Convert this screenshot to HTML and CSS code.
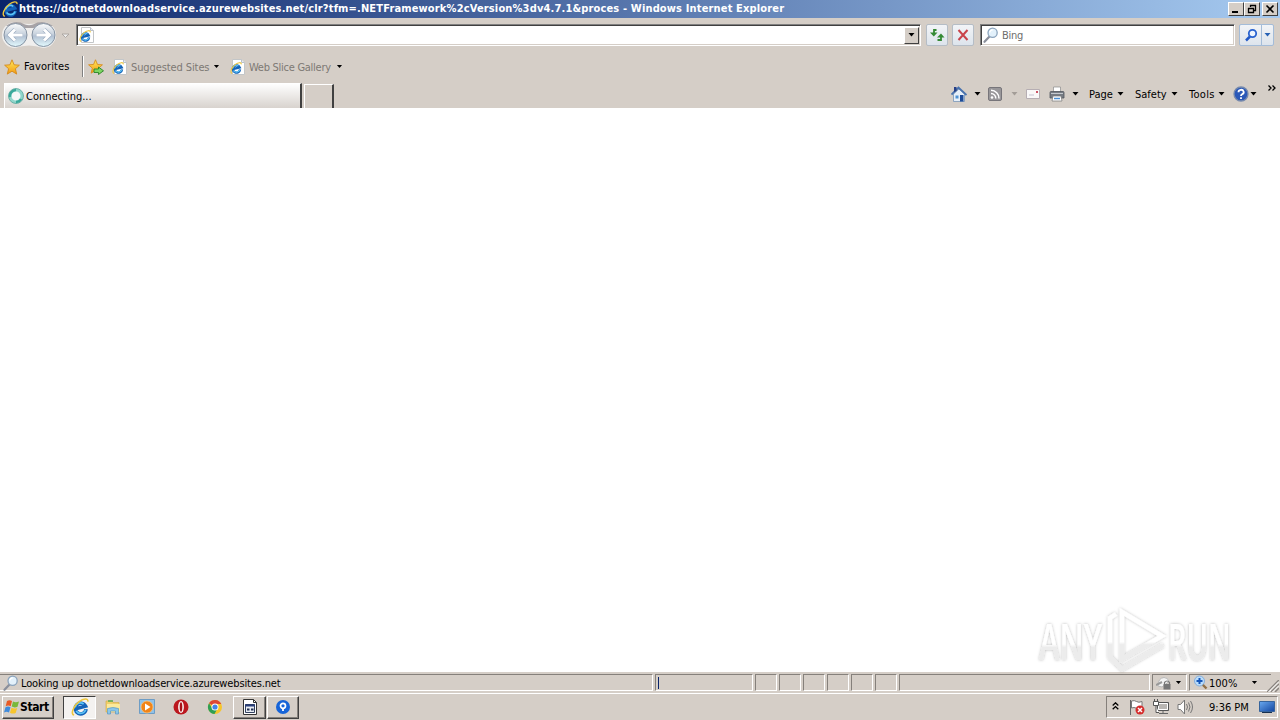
FILE: index.html
```html
<!DOCTYPE html>
<html lang="en">
<head>
    <meta charset="UTF-8">
    <title>Windows Internet Explorer</title>
    <link rel="stylesheet" href="styles.css">
</head>
<body>
    <svg class="defs" width="0" height="0">
        <defs>
            <linearGradient id="orb" x1="0" y1="0" x2="0" y2="1">
                <stop offset="0" stop-color="#fbfcfd"/>
                <stop offset=".45" stop-color="#c9d3de"/>
                <stop offset=".55" stop-color="#b3c1d3"/>
                <stop offset="1" stop-color="#e4fbff"/>
            </linearGradient>
            <linearGradient id="gold" x1="0" y1="0" x2="0" y2="1">
                <stop offset="0" stop-color="#ffe95c"/>
                <stop offset="1" stop-color="#f39a13"/>
            </linearGradient>
            <linearGradient id="screen" x1="0" y1="0" x2="1" y2="1">
                <stop offset="0" stop-color="#6aa9ef"/>
                <stop offset="1" stop-color="#1245a0"/>
            </linearGradient>
            <linearGradient id="mark" gradientUnits="userSpaceOnUse" x1="0" y1="0" x2="0" y2="70">
                <stop offset=".54" stop-color="#fff"/>
                <stop offset=".58" stop-color="#ececec"/>
            </linearGradient>
            <linearGradient id="letters" x1="0" y1="0" x2="0" y2="1">
                <stop offset=".55" stop-color="#fff"/>
                <stop offset=".6" stop-color="#ececec"/>
            </linearGradient>
            <filter id="soft" x="-10%" y="-20%" width="120%" height="150%">
                <feDropShadow dx="0" dy="0" stdDeviation="1.5" flood-color="#000" flood-opacity=".28"/>
            </filter>
        </defs>
        <symbol id="ie" viewBox="0 0 16 16">
            <g transform="rotate(-14 8 9)">
                <path d="M13 11.200A4.800 4.800 0 1 1 13.200 8.500H5" fill="none" stroke="#1463b8" stroke-width="3.200"/>
                <path d="M12.600 11.600A4.900 4.900 0 0 1 4 10.600M4 7.400A4.700 4.700 0 0 1 12 6.200" fill="none" stroke="#5cc4f6" stroke-width="1.500"/>
            </g>
            <path d="M2.800 15.200C-.8 14.500 2.200 7 7.200 3.200C10.800.6 15.400-.4 15 3.200" fill="none" stroke="#eec63c" stroke-width="1.400"/>
        </symbol>
        <symbol id="page" viewBox="0 0 16 16">
            <path d="M2.500.5h9l3 3v12h-12z" fill="#fff" stroke="#c3c6c8"/>
            <path d="M11.500.5v3h3" fill="#e8edf3" stroke="#b9c0ca"/>
            <use href="#ie" x="0" y="3" width="12" height="12"/>
        </symbol>
        <symbol id="star" viewBox="0 0 16 16">
            <path d="M8 .8l2.100 5 5.300.4-4 3.500 1.300 5.400L8 12.200l-4.700 2.900 1.300-5.400-4-3.500 5.300-.4z" fill="url(#gold)" stroke="#d58a1c" stroke-width=".9"/>
        </symbol>
        <symbol id="lens" viewBox="0 0 16 16">
            <path d="M6 10L1.500 14.800" stroke="#8a8f9b" stroke-width="2.200" stroke-linecap="round"/>
            <circle cx="9.600" cy="5.800" r="4.600" fill="#e3f1fb" stroke="#8ba4bd" stroke-width="1.300"/>
            <path d="M6.800 5.500a3 3 0 0 1 3-2.600" stroke="#fff" fill="none" stroke-width="1.300"/>
        </symbol>
    </svg>

    <header class="titlebar">
        <svg class="i16"><use href="#ie"/></svg>
        <span class="title">https://dotnetdownloadservice.azurewebsites.net/clr?tfm=.NETFramework%2cVersion%3dv4.7.1&amp;proces - Windows Internet Explorer</span>
        <div class="winbuttons">
            <button><svg viewBox="0 0 12 10"><path d="M2 8h6" stroke="#000" stroke-width="2"/></svg></button>
            <button><svg viewBox="0 0 12 10"><path d="M4 1.500h6M4.500 1v2M9.500 1v5.500H8M2 4.500h6M2.500 4v4.500h5V4" fill="none" stroke="#000" stroke-width="1.300"/></svg></button>
            <button class="close"><svg viewBox="0 0 12 10"><path d="M2.500 1.500l7 7M9.500 1.500l-7 7" stroke="#000" stroke-width="1.600"/></svg></button>
        </div>
    </header>

    <div class="navbar">
        <svg class="orbs" viewBox="0 0 70 30">
            <path d="M15 2Q29 6 43 2A13 13 0 0 1 43 28Q29 23 15 28A13 13 0 0 1 15 2" fill="#f0efee"/>
            <path d="M6 6Q15-1 25 4.500Q29 6 33 4.500Q43-1 53 6L33 8H25Z" fill="#a7a3a6"/>
            <circle cx="15.500" cy="15" r="11.500" fill="url(#orb)" stroke="#8593a3"/>
            <circle cx="43.500" cy="15" r="11.500" fill="url(#orb)" stroke="#8593a3"/>
            <path d="M22.500 15H10.500M15 9.500L9.500 15l5.500 5.500M36.500 15h12M44 9.500L49.500 15l-5.500 5.500" fill="none" stroke="#9aabc0" stroke-width="4.200"/>
            <path d="M22.500 15H10.500M15 9.500L9.500 15l5.500 5.500M36.500 15h12M44 9.500L49.500 15l-5.500 5.500" fill="none" stroke="#fff" stroke-width="3"/>
            <path d="M62 14h7l-3.500 3.500z" fill="#eee" stroke="#a8a39e" stroke-width=".9"/>
        </svg>
        <div class="address">
            <svg class="i16"><use href="#page"/></svg>
            <button class="drop"><i class="arrow"></i></button>
        </div>
        <button class="navbtn refresh"><svg class="i16" viewBox="0 0 16 16"><path d="M7.500 3H5v3M8.500 13H12v-3" fill="none" stroke="#358a35" stroke-width="1.800"/><path d="M1 5.500h7.500L4.800 9.500zM8 10.500h7.500L12 6.500z" fill="#358a35"/></svg></button>
        <button class="navbtn stop"><svg class="i16" viewBox="0 0 16 16"><path d="M3.500 3l9 10M12.500 3l-9 10" stroke="#c9434b" stroke-width="2"/></svg></button>
        <div class="search">
            <svg class="i16"><use href="#lens"/></svg>
            <span>Bing</span>
        </div>
        <button class="navbtn go"><svg class="i16" viewBox="0 0 16 16"><path d="M7 9.500L3 13.500" stroke="#2259c6" stroke-width="2.500"/><circle cx="9.500" cy="6.500" r="3.700" fill="#eef5ff" stroke="#2862cf" stroke-width="1.800"/></svg></button>
        <button class="navbtn godrop"><i class="arrow blue"></i></button>
    </div>

    <div class="favbar">
        <svg class="i16"><use href="#star"/></svg>
        <span class="favorites">Favorites</span>
        <div class="sep"></div>
        <svg class="i16 addfav" viewBox="0 0 16 16"><use href="#star" width="15" height="15"/><path d="M6 10h4.500V8l5 3.800-5 3.700v-2H6z" fill="#7ed663" stroke="#2a8427" stroke-width=".9"/></svg>
        <svg class="i16 link"><use href="#page"/></svg>
        <span class="suggested">Suggested Sites</span>
        <i class="arrow"></i>
        <svg class="i16 link2"><use href="#page"/></svg>
        <span class="slices">Web Slice Gallery</span>
        <i class="arrow"></i>
    </div>

    <div class="tabrow">
        <div class="tab">
            <svg class="i16" viewBox="0 0 16 16"><circle cx="8" cy="8" r="6" fill="#f5f7f7" stroke="#8fd6cb" stroke-width="3"/><path d="M2 9A6 6 0 0 1 8 2M8 14a6 6 0 0 0 5-3" fill="none" stroke="#39a99b" stroke-width="2.400"/><circle cx="8" cy="8" r="7.500" fill="none" stroke="#4f9d94" stroke-width=".7"/></svg>
            <span>Connecting...</span>
        </div>
        <div class="newtab"></div>
        <div class="commands">
            <svg class="i16" viewBox="0 0 16 16"><path d="M2.500 8v7.500h11V8L8 3z" fill="#e6eff9" stroke="#7895b8" stroke-width=".8"/><path d="M.5 8.500L7.500 1.500L15.500 9" fill="none" stroke="#4872ae" stroke-width="1.800"/><path d="M3 1h2.500v4L3 6z" fill="#263f86"/><path d="M9 9h3.500v6.500H9z" fill="#1d4b98"/><path d="M4.500 9.500h3v3h-3z" fill="#4f93d3"/></svg>
            <i class="arrow a1"></i>
            <svg class="i16 rss" viewBox="0 0 16 16"><rect x="1.500" y="1.500" width="13" height="13" rx="1.500" fill="#99979a" stroke="#77757a"/><circle cx="5" cy="11.500" r="1.300" fill="#fff"/><path d="M4 7.500a5 5 0 0 1 4.800 5M4 4.300a8 8 0 0 1 8 8.200" fill="none" stroke="#fff" stroke-width="1.500"/></svg>
            <i class="arrow a2 dim"></i>
            <svg class="i16 mail" viewBox="0 0 16 16"><path d="M1.500 3.500h13v9h-13z" fill="#faf8f8" stroke="#b6aeb3"/><path d="M11 5h2v2h-2z" fill="#cc5365"/><path d="M4 9h5" stroke="#c5c2d1"/></svg>
            <svg class="i16 print" viewBox="0 0 16 16"><path d="M4.500 1h7v5h-7z" fill="#fff" stroke="#8b8b8b" stroke-width=".7"/><path d="M1 6.500q0-1 1-1h12q1 0 1 1V12H1z" fill="#777c84" stroke="#52575e" stroke-width=".8"/><path d="M2 7.500h12" stroke="#c5c9ce"/><path d="M4 10h8l1 5H3z" fill="#fff" stroke="#777" stroke-width=".7"/><path d="M5 12.500h6" stroke="#4b8fd3" stroke-width="1.500"/></svg>
            <i class="arrow a3"></i>
            <span class="c-page">Page</span><i class="arrow"></i>
            <span class="c-safety">Safety</span><i class="arrow"></i>
            <span class="c-tools">Tools</span><i class="arrow"></i>
            <svg class="i16 help" viewBox="0 0 16 16"><circle cx="8" cy="8" r="7" fill="#2a58b8" stroke="#7689ac" stroke-width="1.300"/><path d="M5.500 6.200a2.600 2.300 0 1 1 3.600 2Q8 8.800 8 10M8 11.200v1.800" fill="none" stroke="#fff" stroke-width="1.800"/></svg>
            <i class="arrow a4"></i>
            <svg class="more" viewBox="0 0 8 6"><path d="M.5.5L3 3 .5 5.500M4.500.5L7 3 4.500 5.500" fill="none" stroke="#000" stroke-width="1.300"/></svg>
        </div>
    </div>

    <main class="content">
        <svg class="watermark" viewBox="0 0 210 80">
            <g filter="url(#soft)">
                <text transform="translate(9 56) scale(.62 1)">ANY</text>
                <text transform="translate(138 56) scale(.58 1)">RUN</text>
                <path d="M92 8L132 32L92 55Z"/>
                <path d="M86 10L80 14V53L92 65L133 41"/>
            </g>
        </svg>
    </main>

    <div class="statusbar">
        <div class="pane p-text"><svg class="i16"><use href="#lens"/></svg><span>Looking up dotnetdownloadservice.azurewebsites.net</span></div>
        <div class="pane p-progress"><b></b></div>
        <div class="pane p-small"></div>
        <div class="pane p-small"></div>
        <div class="pane p-small"></div>
        <div class="pane p-small"></div>
        <div class="pane p-small"></div>
        <div class="pane p-small"></div>
        <div class="pane p-zone"></div>
        <div class="pane p-lock">
            <svg class="i16" viewBox="0 0 16 16"><path d="M2 11q0-8 6-8.500 4 0 5 4L6 12z" fill="#f3f3f3" stroke="#b8b8b8"/><path d="M0 10l6-3" stroke="#999" stroke-width="2"/><path d="M8.500 9.500V7.500q2.500-3 5 0v2" fill="none" stroke="#777" stroke-width="1.200"/><path d="M7.500 9h7v5.500h-7z" fill="#777"/></svg>
            <i class="arrow"></i>
        </div>
        <div class="pane p-zoom">
            <svg class="i16" viewBox="0 0 16 16"><path d="M9.500 9.500l4 4" stroke="#927045" stroke-width="2.400"/><circle cx="6.500" cy="6" r="5" fill="#b9dcfb" stroke="#85aedb"/><path d="M6.500 3v6M3.500 6h6" stroke="#1556ba" stroke-width="2"/></svg>
            <span>100%</span>
            <i class="arrow"></i>
        </div>
        <svg class="grip" viewBox="0 0 12 12"><path d="M0 12L12 0M4 12l8-8M8 12l4-4" stroke="#8a8580" stroke-width="1.500"/><path d="M1.500 12L12 1.500M5.500 12L12 5.500" stroke="#fff"/></svg>
    </div>

    <footer class="taskbar">
        <button class="start">
            <svg class="i16" viewBox="0 0 16 16"><path d="M3 2q2.500-1.500 5 0L6.700 7.300q-2.500-1.500-5 0z" fill="#e85a25"/><path d="M9 2.500q2.500 1.500 6 0l-1.500 5.300q-3 1.300-5.800-.2z" fill="#79b83b"/><path d="M1.500 8.300q2.500-1.500 5 0L5 13.500q-2.500-1.500-5 0z" fill="#3f8bdc"/><path d="M7.500 8.700q2.500 1.500 5.700.2L11.700 14q-3 1.300-5.700-.3z" fill="#f7c52d"/></svg>
            <span>Start</span>
        </button>
        <div class="task pressed"><svg class="i18"><use href="#ie"/></svg></div>
        <svg class="i16 q1" viewBox="0 0 16 16"><path d="M1 2h6l1 1.500h6V13H1z" fill="#f0cf69" stroke="#d5aa43" stroke-width=".6"/><path d="M2 5h13v8H2z" fill="#fbe99c"/><path d="M3 2h5" stroke="#58aa53" stroke-width="1.500"/><path d="M2.500 15V9.500q5.500-2 11 0V15h-3v-3h-5v3z" fill="#8ac6ea" stroke="#4a8fc0" stroke-width=".6"/></svg>
        <svg class="i16 q2" viewBox="0 0 16 16"><path d="M.5.5h15v14H.5z" fill="#8fc2ea" stroke="#6e9dc5"/><circle cx="8" cy="8" r="6" fill="#f18418" stroke="#fbc176" stroke-width=".8"/><path d="M6 4.500v7L11.500 8z" fill="#fff"/></svg>
        <svg class="i16 q3" viewBox="0 0 16 16"><ellipse cx="8" cy="8" rx="7.500" ry="7.500" fill="#bb171e"/><ellipse cx="8" cy="8" rx="2.900" ry="6" fill="#fbf1f0"/><ellipse cx="8" cy="8" rx="1.300" ry="4.700" fill="#a71118"/></svg>
        <svg class="i16 q4" viewBox="0 0 16 16"><circle cx="8" cy="8" r="7" fill="#f6c52b"/><path d="M8 8L2 4.200A7 7 0 0 1 14.300 5H8z" fill="#dd4735"/><path d="M2 4.200A7 7 0 0 0 7.500 15L10.500 9.500 5.500 9.500z" fill="#2f9f54"/><circle cx="8" cy="8" r="3.500" fill="#fff"/><circle cx="8" cy="8" r="2.600" fill="#4384e8"/></svg>
        <div class="task t1"><svg class="i16" viewBox="0 0 16 16"><path d="M1.500.5h10l3 3v12h-13z" fill="#fff" stroke="#333"/><path d="M11.500.5v3h3" fill="none" stroke="#333"/><path d="M3.500 5.500h9v8h-9z" fill="#e8ecf3" stroke="#33415f"/><path d="M3 6.500h10" stroke="#273d79" stroke-width="2"/><path d="M5 10.500h2.500M9 10.500h2.500" stroke="#1d2c50" stroke-width="2"/></svg></div>
        <div class="task t2"><svg class="i16" viewBox="0 0 16 16"><circle cx="8" cy="8" r="7" fill="#1664d8"/><circle cx="8" cy="6.800" r="2.500" fill="#1664d8" stroke="#fff" stroke-width="1.700"/><path d="M8 9v3" stroke="#fff" stroke-width="1.800"/></svg></div>
        <div class="tray">
            <svg class="chev" viewBox="0 0 7 8"><path d="M.7 3.500L3.500.8l2.800 2.700M.7 7.300L3.500 4.600l2.800 2.700" fill="none" stroke="#000" stroke-width="1.300"/></svg>
            <svg class="i16 flag" viewBox="0 0 16 16"><path d="M1.500 1v15" stroke="#666"/><path d="M2.500 2q3-1 5 .5t5.500 0v7q-3 1-5.500-.3T2.500 9z" fill="#fff" stroke="#777"/><circle cx="11" cy="11" r="4.500" fill="#d52c2c"/><path d="M9 9l4 4M13 9l-4 4" stroke="#fff" stroke-width="1.500"/></svg>
            <svg class="i16 net" viewBox="0 0 16 16"><path d="M4.500 3.500h11v8h-11z" fill="#b9b6b3" stroke="#555"/><path d="M5.500 4.500h9v6h-9z" fill="none" stroke="#fff"/><path d="M6 14.500h9M10 12v2" stroke="#666"/><path d="M.5 2.500h5v4h-5zM1.500 0v2M4.500 0v2M3 7v6.500h3" fill="#fff" stroke="#555"/></svg>
            <svg class="i16 vol" viewBox="0 0 16 16"><path d="M1 5.500h2.500L7.500 1v14L3.500 10.500H1z" fill="#fff" stroke="#777"/><path d="M9.500 5q2 3 0 6M11.500 3.500q3 4.500 0 9M13.500 2q4 6 0 12" fill="none" stroke="#777"/></svg>
            <span class="clock">9:36 PM</span>
            <svg class="i16 desk" viewBox="0 0 16 16"><path d="M.5 2.500h15v10H.5z" fill="url(#screen)" stroke="#37649c"/><path d="M3 13.500h10" stroke="#18304f"/></svg>
        </div>
    </footer>
</body>
</html>
```

FILE: styles.css
```css
* {
    box-sizing: border-box;
}
body {
    margin: 0;
    width: 1280px;
    height: 720px;
    overflow: hidden;
    display: flex;
    flex-direction: column;
    background-color: #d5cec7;
    color: #000;
    font-family: 'DejaVu Sans Condensed', 'DejaVu Sans', sans-serif;
    font-size: 11px;
    line-height: 14px;
    white-space: nowrap;
}
button {
    padding: 0;
    font: inherit;
    color: inherit;
}
svg {
    display: block;
    flex: none;
}
span {
    flex: none;
}
.defs {
    position: absolute;
}
.i16 {
    width: 16px;
    height: 16px;
}
.i18 {
    width: 18px;
    height: 18px;
}
.arrow {
    flex: none;
    width: 7px;
    height: 4px;
    margin-left: -1px;
    margin-right: -1px;
    background-color: #000;
    clip-path: polygon(7% 0, 93% 0, 50% 88%);
}
.arrow.blue {
    background-color: #2862b5;
}
.arrow.dim {
    background-color: #a39d97;
}

/* title bar */
.titlebar {
    height: 18px;
    flex: none;
    display: flex;
    align-items: center;
    padding: 0 2px;
    background: linear-gradient(to right, #0a246a, #a6caf0);
    color: #fff;
}
.title {
    width: 800px;
    margin-left: 1px;
    font-weight: bold;
    letter-spacing: 0.152px;
}
.winbuttons {
    display: flex;
    margin-left: auto;
}
.winbuttons button {
    width: 16px;
    height: 14px;
    border: 1px solid;
    border-color: #fff #404040 #404040 #fff;
    background-color: #d5cec7;
}
.winbuttons .close {
    margin-left: 2px;
}
.winbuttons svg {
    width: 12px;
    height: 10px;
    margin: 1px;
}

/* address row */
.navbar {
    height: 36px;
    flex: none;
    display: flex;
    align-items: center;
    padding-bottom: 2px;
}
.orbs {
    width: 70px;
    height: 30px;
}
.address, .search {
    height: 22px;
    display: flex;
    align-items: center;
    background-color: #fff;
    border: 1px solid;
    border-color: #808080 #fff #fff #808080;
    box-shadow: inset 1px 1px #404040, inset -1px -1px #d5cec7;
}
.address {
    width: 845px;
    margin-left: 6px;
    padding: 0 1px 0 2px;
}
.drop {
    width: 15px;
    height: 17px;
    margin-left: auto;
    display: flex;
    align-items: center;
    justify-content: center;
    border: 1px solid;
    border-color: #fff #404040 #404040 #fff;
    background-color: #d5cec7;
}
.navbtn {
    width: 22px;
    height: 22px;
    display: flex;
    align-items: center;
    justify-content: center;
    border: 1px solid #b5bdc6;
    border-radius: 2px;
    background: linear-gradient(#f2f4f7, #dde4ec);
}
.refresh {
    margin-left: 5px;
}
.stop {
    margin-left: 4px;
}
.search {
    width: 255px;
    margin-left: 6px;
    padding-left: 2px;
    color: #6d6d6d;
}
.search span {
    margin: 2px 0 0 3px;
    letter-spacing: -0.3px;
}
.go {
    width: 23px;
    margin-left: 4px;
    border-radius: 2px 0 0 2px;
    border-color: #a4bcd8;
}
.godrop {
    width: 13px;
    margin-left: -1px;
    border-radius: 0 2px 2px 0;
    border-color: #a4bcd8;
}

/* favorites */
.favbar {
    height: 28px;
    flex: none;
    display: flex;
    align-items: center;
    padding: 0 0 3px 4px;
}
.favorites {
    width: 58px;
    margin-left: 4px;
    letter-spacing: 0.1px;
}
.sep {
    width: 2px;
    height: 21px;
    border-left: 1px solid #808080;
    border-right: 1px solid #fff;
}
.addfav {
    margin-left: 4px;
}
.link {
    margin-left: 8px;
}
.suggested, .slices {
    color: #7d7974;
    padding-top: 2px;
}
.suggested {
    width: 83px;
    margin-left: 3px;
    letter-spacing: -0.1px;
}
.link2 {
    margin-left: 11px;
}
.slices {
    width: 88px;
    margin-left: 3px;
    letter-spacing: -0.27px;
}

/* tabs and command bar */
.tabrow {
    height: 26px;
    flex: none;
    display: flex;
    align-items: flex-end;
    padding-left: 4px;
}
.tab {
    width: 298px;
    height: 25px;
    display: flex;
    align-items: center;
    padding-left: 4px;
    border: 1px solid #fff;
    border-right: 2px solid #404040;
    border-bottom: 0;
    background: linear-gradient(#fefefe, #d8d3ce);
}
.tab .i16 {
    margin-left: -1px;
}
.tab span {
    margin: 1px 0 0 2px;
}
.newtab {
    width: 30px;
    height: 24px;
    margin-left: 2px;
    border: 1px solid #fff;
    border-right: 2px solid #404040;
    border-bottom: 0;
}
.commands {
    display: flex;
    align-items: center;
    height: 26px;
    margin-left: 617px;
    padding-bottom: 2px;
}
.commands span {
    padding-top: 1px;
}
.a1 {
    margin-left: 7px;
}
.rss {
    margin-left: 7px;
}
.a2 {
    margin-left: 8px;
}
.mail {
    margin-left: 8px;
}
.print {
    margin-left: 8px;
}
.a3 {
    margin-left: 7px;
}
.c-page {
    width: 29px;
    margin-left: 11px;
}
.c-safety {
    width: 37px;
    margin-left: 12px;
}
.c-tools {
    width: 30px;
    margin-left: 12px;
    letter-spacing: 0.3px;
}
.help {
    margin-left: 9px;
}
.a4 {
    margin-left: 1px;
}
.more {
    width: 8px;
    height: 6px;
    margin: 0 0 12px 12px;
}

/* page area */
.content {
    flex: 1;
    display: flex;
    align-items: flex-end;
    justify-content: flex-end;
    background-color: #fff;
}
.watermark {
    width: 210px;
    height: 80px;
    margin: 0 40px -12px 0;
    position: relative;
    z-index: 1;
}
.watermark text {
    fill: url(#letters);
    font-family: 'Open Sans', sans-serif;
    font-size: 50px;
    font-weight: 600;
}
.watermark path {
    fill: none;
    stroke: url(#mark);
    stroke-width: 4.5;
}

/* status bar */
.statusbar {
    height: 22px;
    flex: none;
    display: flex;
    gap: 2px;
    padding: 2px 0;
    border-bottom: 1px solid #fff;
}
.pane {
    flex: none;
    display: flex;
    align-items: center;
    border: 1px solid;
    border-color: #85807b #fff #fff #85807b;
}
.pane span {
    padding-top: 2px;
}
.p-text {
    width: 654px;
    margin-left: -1px;
    padding-left: 3px;
}
.p-text span {
    margin-left: 2px;
    letter-spacing: -0.14px;
}
.p-progress {
    width: 98px;
    padding-left: 2px;
}
.p-progress b {
    width: 1px;
    height: 12px;
    background-color: #0a246a;
}
.p-small {
    width: 22px;
}
.p-zone {
    width: 251px;
}
.p-lock {
    width: 35px;
    padding-left: 3px;
}
.p-lock .arrow {
    margin-left: 3px;
}
.p-zoom {
    width: 82px;
    padding-left: 3px;
    border-right: 0;
}
.p-zoom span {
    width: 43px;
}
.grip {
    width: 12px;
    height: 12px;
    margin: 6px 0 0 -6px;
}

/* taskbar */
.taskbar {
    height: 26px;
    flex: none;
    display: flex;
    align-items: center;
    padding-left: 2px;
}
.start, .task {
    height: 23px;
    display: flex;
    align-items: center;
    background-color: #d5cec7;
    border: 1px solid;
    border-color: #fff #404040 #404040 #fff;
    box-shadow: inset -1px -1px #85807b;
}
.start {
    width: 52px;
    padding-left: 1px;
    font-weight: bold;
    font-size: 12px;
    letter-spacing: -0.4px;
}
.task {
    width: 33px;
    justify-content: center;
}
.pressed {
    margin-left: 9px;
    background-color: #f4f2f0;
    border-color: #404040 #fff #fff #404040;
    box-shadow: none;
}
.q1 {
    margin-left: 9px;
}
.q2, .q3, .q4 {
    margin-left: 18px;
}
.t1 {
    margin-left: 10px;
}
.t2 {
    width: 32px;
    margin-left: 1px;
}
.tray {
    width: 172px;
    height: 22px;
    display: flex;
    align-items: center;
    margin: 0 2px 0 auto;
    border: 1px solid;
    border-color: #85807b #fff #fff #85807b;
}
.chev {
    width: 7px;
    height: 8px;
    margin: 0 0 2px 5px;
}
.flag {
    margin-left: 10px;
}
.net, .vol {
    margin-left: 8px;
}
.clock {
    width: 50px;
    margin-left: 16px;
    padding-top: 1px;
}
```
